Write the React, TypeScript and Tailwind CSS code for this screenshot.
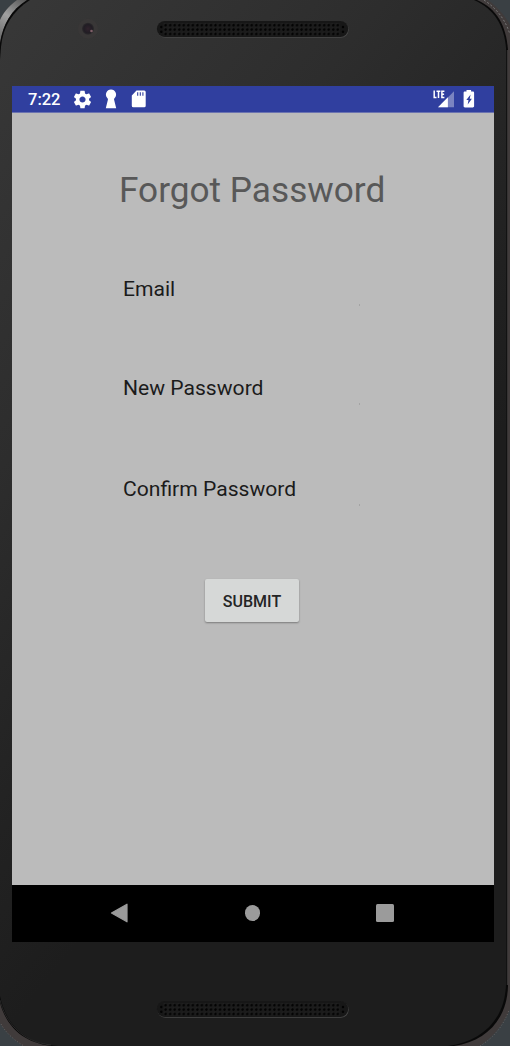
import React from 'react';

const ROBOTO = "font-['Roboto',sans-serif]";

function Shell() {
  return (
    <svg className="absolute inset-0" width="510" height="1046" viewBox="0 0 510 1046" aria-hidden="true">
      <defs>
        <linearGradient id="body" x1="0" y1="0" x2="510" y2="420" gradientUnits="userSpaceOnUse">
          <stop offset="0" stopColor="#383838" />
          <stop offset="0.45" stopColor="#2d2d2d" />
          <stop offset="0.8" stopColor="#222222" />
          <stop offset="1" stopColor="#1d1d1d" />
        </linearGradient>
        <linearGradient id="rimLeft" x1="0" y1="40" x2="28" y2="0" gradientUnits="userSpaceOnUse">
          <stop offset="0" stopColor="#6a6a6a" />
          <stop offset="0.5" stopColor="#a0a0a0" />
          <stop offset="1" stopColor="#555555" />
        </linearGradient>
        <radialGradient id="lens" cx="0.5" cy="0.5" r="0.5">
          <stop offset="0" stopColor="#30222c" />
          <stop offset="0.7" stopColor="#211d24" />
          <stop offset="1" stopColor="#2c2a2c" />
        </radialGradient>
      </defs>
      <rect width="510" height="1046" fill="#3a4044" />
      <path d="M17 0C8 7 3 13 0 20V1023C5 1031 13 1039 23 1046H479C491 1039 502 1027 510 1009V25C504 14 496 6 488 0Z" fill="#403b3b" />
      <path d="M17 0C8 7 3 13 0 20V45C3 24 11 10 28 0Z" fill="url(#rimLeft)" />
      <path d="M484 0C496 8 505 19 509.5 33" fill="none" stroke="#777" strokeWidth="1" strokeDasharray="2 2" />
      <path d="M1 1024C6 1033 14 1040 24 1046M480 1046C493 1038 503 1027 509 1010" fill="none" stroke="#77706e" strokeWidth="0.7" strokeDasharray="1 2" />
      <path d="M27 0C11 10 3 24 0 43V1003C6 1024 20 1042 51 1046H454C486 1041 507 1020 508 986V50C506 25 497 9 477 0Z" fill="#090909" />
      <path d="M30 0C13 11 3 26 1 47L0 60V996C5 1020 20 1043 58 1046H448C483 1041 505 1019 506 984V48C504 25 494 9 474 0Z" fill="url(#body)" />
      <path d="M507.5 50V985" stroke="#353333" strokeWidth="1" />
      <path d="M506.5 50V985" stroke="#121212" strokeWidth="1" />
      <path d="M0 1000C5 1021 21 1042 51 1045" fill="none" stroke="#3c3c3c" strokeWidth="0.6" />
      <circle cx="88" cy="28.7" r="10" fill="#393737" />
      <circle cx="88" cy="28.7" r="6" fill="url(#lens)" />
      <circle cx="91.5" cy="31" r="1.3" fill="#806068" />
    </svg>
  );
}

function Speaker({ id }: { id: string }) {
  return (
    <svg className="block" width="193" height="18" viewBox="0 0 193 18" aria-hidden="true">
      <defs>
        <pattern id={id} x="7.4" y="2" width="4.53" height="4.4" patternUnits="userSpaceOnUse">
          <rect width="4.53" height="4.4" fill="#1b1b1b" />
          <circle cx="2.2" cy="2.2" r="1.25" fill="#020202" />
          <path d="M0.8 0.8L1.5 0.8" stroke="#333" strokeWidth="0.6" />
        </pattern>
      </defs>
      <rect x="1.4" y="0.8" width="191.3" height="16" rx="8" fill="#494949" />
      <rect x="0.9" y="0" width="191.3" height="16" rx="8" fill="#171717" />
      <rect x="7.4" y="2" width="176.7" height="13.2" fill={`url(#${id})`} />
      <g fill="#030303">
        <circle cx="5.3" cy="6" r="1.2" />
        <circle cx="5.3" cy="10.8" r="1.2" />
        <circle cx="187" cy="6" r="1.2" />
        <circle cx="187" cy="10.8" r="1.2" />
      </g>
    </svg>
  );
}

function StatusBar() {
  return (
    <div className="flex h-[27px] items-center border-b border-[#6b73b0] bg-[#303f9f] pl-4 text-white">
      <span className="w-[44px] pt-px text-[16.5px] leading-[26px] font-medium whitespace-nowrap">7:22</span>
      <svg className="block shrink-0" width="21" height="21" viewBox="0 0 24 24" fill="currentColor">
        <path d="M19.43 12.98c.04-.32.07-.64.07-.98s-.03-.66-.07-.98l2.11-1.65c.19-.15.24-.42.12-.64l-2-3.46c-.12-.22-.39-.3-.61-.22l-2.49 1c-.52-.4-1.08-.73-1.69-.98l-.38-2.65A.488.488 0 0 0 14 2h-4c-.25 0-.46.18-.49.42l-.38 2.65c-.61.25-1.17.59-1.69.98l-2.49-1c-.23-.09-.49 0-.61.22l-2 3.46c-.13.22-.07.49.12.64l2.11 1.65c-.04.32-.07.65-.07.98s.03.66.07.98l-2.11 1.65c-.19.15-.24.42-.12.64l2 3.46c.12.22.39.3.61.22l2.49-1c.52.4 1.08.73 1.69.98l.38 2.65c.03.24.24.42.49.42h4c.25 0 .46-.18.49-.42l.38-2.65c.61-.25 1.17-.59 1.69-.98l2.49 1c.23.09.49 0 .61-.22l2-3.46c.12-.22.07-.49-.12-.64l-2.11-1.65zM12 15.5c-1.93 0-3.5-1.57-3.5-3.5s1.57-3.5 3.5-3.5 3.5 1.57 3.5 3.5-1.57 3.5-3.5 3.5z" />
      </svg>
      <svg className="ml-[12px] block shrink-0" width="12" height="20" viewBox="0 0 12 20" fill="currentColor">
        <path d="M6 .6a5 5 0 0 0-3.700 8.400c.6.6.7 1 .6 1.800L.8 19.300h10.400L9.100 10.800c-.1-.8 0-1.200.6-1.800A5 5 0 0 0 6 .6z" />
      </svg>
      <svg className="ml-[14px] block shrink-0" width="15" height="18" viewBox="0 0 15 18">
        <path d="M5.5.5H13.200a1.500 1.500 0 0 1 1.500 1.500v13.800a1.500 1.500 0 0 1-1.500 1.500H2.300a1.500 1.500 0 0 1-1.500-1.500V5.500z" fill="currentColor" />
        <path d="M6.700 2.200v3.500M9.300 2.200v3.500M11.900 2.200v3.500" stroke="#303f9f" strokeWidth="1.100" />
      </svg>
      <div className="ml-auto flex items-center pr-[19px]">
        <svg className="block" width="22" height="20" viewBox="0 0 22 20">
          <path d="M21 2.200V18.200H5.200z" fill="#7b84c1" />
          <path d="M14.900 8.200V18.200H5z" fill="#fff" />
          <path d="M0 1h12v9.200H0z" fill="#303f9f" />
          <path d="M1.200 1.500v6.900h2.300M3.500 2.200h3.900M5.500 2.200v6.900M11.400 2.200H8.900v6.200h2.500M8.900 5.300h2.200" fill="none" stroke="#fff" strokeWidth="1.500" />
        </svg>
        <svg className="ml-[8px] block" width="12" height="20" viewBox="0 0 12 20">
          <path d="M3.500 1h4.600v1.500h1.700c.7 0 1.300.5 1.300 1.200v13.600c0 .7-.6 1.200-1.300 1.200H1.900c-.7 0-1.300-.5-1.300-1.200V3.700c0-.7.6-1.200 1.300-1.200h1.600z" fill="#fff" />
          <path d="M7.600 5.600L3.300 10.900h2.200L4.700 15.600l4.200-5.800H6.700z" fill="#303f9f" />
        </svg>
      </div>
    </div>
  );
}

function Field({ label }: { label: string }) {
  return (
    <div className="flex h-[30px] w-[237px] items-start justify-between">
      <label className="text-[21.1px] leading-6 whitespace-nowrap text-[#1b1b1b]">{label}</label>
      <span className="mt-[27px] h-[2px] w-px bg-[#a4a4a4]" />
    </div>
  );
}

function NavBar() {
  return (
    <div className="flex h-[57px] items-center bg-black pb-px pl-[98px]">
      <svg className="block" width="18" height="20" viewBox="0 0 18 20">
        <path d="M17 1.2V18.8L1.5 10z" fill="#9b9b9b" stroke="#9b9b9b" strokeWidth="1.2" strokeLinejoin="round" />
      </svg>
      <div className="ml-[116.5px] h-[15.5px] w-[15.5px] rounded-full bg-[#9b9b9b]" />
      <div className="ml-[116px] h-[18px] w-[18px] rounded-[1.5px] bg-[#9b9b9b]" />
    </div>
  );
}

export default function App() {
  return (
    <div className={`relative h-[1046px] w-[510px] overflow-hidden bg-[#1d1d1d] ${ROBOTO}`}>
      <Shell />
      <div className="relative flex h-full flex-col">
        <header className="h-[86px] pt-[21px] pl-[156px]">
          <Speaker id="topGrille" />
        </header>
        <main className="ml-3 flex h-[856px] w-[482px] flex-col">
          <StatusBar />
          <section className="flex flex-1 flex-col bg-[#bbbbbb] pt-[56px]">
            <h1 className="ml-[107px] text-[35.2px] leading-[42px] whitespace-nowrap text-[#585858]">
              Forgot Password
            </h1>
            <form className="mt-[66px] ml-[111px] flex flex-col" onSubmit={(e) => e.preventDefault()}>
              <Field label="Email" />
              <div className="mt-[69px]">
                <Field label="New Password" />
              </div>
              <div className="mt-[71px]">
                <Field label="Confirm Password" />
              </div>
              <button className="mt-[72px] ml-[82px] h-[43px] w-[94px] rounded-[2px] bg-[#d6d8d7] pt-[2px] text-[16px] font-medium whitespace-nowrap text-[#242424] shadow-[0_1px_2px_rgba(0,0,0,0.35)]">
                SUBMIT
              </button>
            </form>
          </section>
          <NavBar />
        </main>
        <footer className="pt-[59px] pl-[156px]">
          <Speaker id="bottomGrille" />
        </footer>
      </div>
    </div>
  );
}
